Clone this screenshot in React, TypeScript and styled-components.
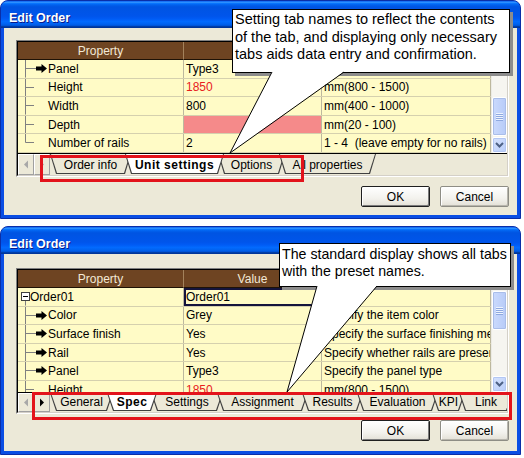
import React from 'react';
import styled, { createGlobalStyle } from 'styled-components';

const FONT = `"Liberation Sans", Arial, sans-serif`;

type Tree = 'root' | 'child' | 'last';
interface RowData {
  name: string;
  tree: Tree;
  arrow?: boolean;
  value: string;
  red?: boolean;
  pink?: boolean;
  selected?: boolean;
  desc: string;
}
interface TabData {
  label: string;
  w: number;
  active?: boolean;
}

const GlobalStyle = createGlobalStyle`
  html, body { margin: 0; padding: 0; background: #ffffff; }
  body { font-family: ${FONT}; }
  * { box-sizing: border-box; }
`;

const Page = styled.div`
  width: 524px;
  height: 458px;
  overflow: hidden;
  display: flex;
  flex-direction: column;
  gap: 7px;
`;

const Shell = styled.div`
  position: relative;
  width: 521px;
  flex: none;
`;

const Window = styled.div<{ $h: number }>`
  width: 521px;
  height: ${p => p.$h}px;
  display: flex;
  flex-direction: column;
  background: #0a4ee4;
  border: 1px solid #0a2ea8;
  border-radius: 8px 8px 0 0;
  overflow: hidden;
`;

const TitleBar = styled.div`
  flex: none;
  height: 27px;
  padding: 6px 0 0 8px;
  display: flex;
  align-items: center;
  background: linear-gradient(180deg, #0058ee 0%, #3593ff 4%, #288eff 6%, #127dff 8%, #036ffc 10%, #0262ee 14%, #0057e5 20%, #0054e3 24%, #0055eb 56%, #005bf5 66%, #026afe 76%, #0062ef 86%, #0052d6 92%, #0040ab 94%, #003092 100%);
  color: #ffffff;
  font: bold 12.5px ${FONT};
  text-shadow: 1px 1px 0 #0a1a8a;
`;

const Body = styled.div<{ $pt: number; $gap: number; $pb: number }>`
  flex: 1;
  margin: 0 3px 3px;
  background: #ece9d8;
  display: flex;
  flex-direction: column;
  padding: ${p => p.$pt}px 8px ${p => p.$pb}px 12px;
  gap: ${p => p.$gap}px;
`;

const Frame = styled.div`
  flex: none;
  border: 1px solid;
  border-color: #808080 #ffffff #ffffff #808080;
`;

const GridBox = styled.div<{ $head: number; $view: number; $strip: number }>`
  display: grid;
  grid-template-columns: 166px 138px 169px 16px;
  grid-template-rows: ${p => p.$head}px ${p => p.$view}px ${p => p.$strip}px;
  border: 1px solid;
  border-color: #000000 #d4d0c8 #d4d0c8 #000000;
  background: #ece9d8;
`;

const HeaderCell = styled.div`
  background: #6e4422;
  color: #f3e9d6;
  font: 12px ${FONT};
  display: flex;
  align-items: center;
  justify-content: center;
  white-space: nowrap;
  overflow: hidden;
  border-right: 1px solid #a3825c;
  border-bottom: 1px solid #1e1206;
`;

const Viewport = styled.div`
  grid-column: 1 / 4;
  overflow: hidden;
  background: #fffbc6;
`;

const Row = styled.div<{ $h: number }>`
  display: grid;
  grid-template-columns: 166px 138px 169px;
  height: ${p => p.$h}px;
  border-bottom: 1px solid #d5d0ae;
  font: 12px ${FONT};
  color: #000000;
`;

const Cell = styled.div<{ $bg?: string; $color?: string; $sel?: boolean }>`
  display: flex;
  align-items: center;
  overflow: hidden;
  white-space: pre;
  padding-left: 2px;
  border-right: 1px solid #bdb89e;
  background: ${p => p.$bg ?? 'transparent'};
  color: ${p => p.$color ?? '#000000'};
  box-shadow: ${p => (p.$sel ? 'inset 0 0 0 2px #14143c' : 'none')};
`;

const NameCell = styled(Cell)`
  padding-left: 0;
`;

const GutterSvg = styled.svg`
  flex: none;
  display: block;
`;

const ScrollBar = styled.div`
  grid-column: 4;
  grid-row: 1 / 3;
  display: flex;
  flex-direction: column;
  background: #f6f5f0;
  border-left: 1px solid #ecebe4;
`;

const ScrollButton = styled.div`
  flex: none;
  height: 16px;
  border: 1px solid #ffffff;
  border-radius: 2px;
  background: linear-gradient(135deg, #d6e2fd, #b9cdf9);
  box-shadow: inset 0 0 0 1px #b2c6f3;
  display: flex;
  align-items: center;
  justify-content: center;
`;

const Track = styled.div`
  flex: 1;
  display: flex;
  flex-direction: column;
`;

const Thumb = styled.div<{ $top: number; $h: number }>`
  flex: none;
  margin-top: ${p => p.$top}px;
  height: ${p => p.$h}px;
  border: 1px solid #ffffff;
  border-radius: 2px;
  background: linear-gradient(90deg, #cbdafd, #b7cbf8);
  box-shadow: inset 0 0 0 1px #a9bde9;
  display: flex;
  align-items: center;
  justify-content: center;
`;

const Grip = styled.div`
  width: 7px;
  height: 8px;
  background: repeating-linear-gradient(180deg, #eef4fe 0 1px, #8fa9e0 1px 2px);
`;

const Strip = styled.div`
  grid-column: 1 / 5;
  display: flex;
  align-items: flex-start;
  border-top: 1px solid #000000;
  overflow: hidden;
  isolation: isolate;
  background: #ece9d8;
`;

const NavButton = styled.div`
  flex: none;
  width: 16px;
  align-self: stretch;
  display: flex;
  align-items: center;
  justify-content: center;
  border: 1px solid;
  border-color: #ffffff #a0a0a0 #a0a0a0 #ffffff;
  background: #ece9d8;
`;

const Tab = styled.div<{ $w: number; $h: number; $active?: boolean; $z: number; $first?: boolean }>`
  position: relative;
  z-index: ${p => p.$z};
  flex: none;
  width: ${p => p.$w}px;
  height: ${p => p.$h}px;
  margin-left: ${p => (p.$first ? 0 : -6)}px;
  display: flex;
  align-items: flex-end;
  justify-content: center;
  padding-bottom: 2px;
  font: ${p => (p.$active ? 'bold ' : '')}12px ${FONT};
  letter-spacing: ${p => (p.$active ? '0.5px' : '0')};
  line-height: 14px;
  white-space: nowrap;
  color: #000000;

  &::before {
    content: '';
    position: absolute;
    inset: 0;
    z-index: -1;
    background: #404040;
    clip-path: polygon(0 0, 100% 0, calc(100% - 6px) 100%, 6px 100%);
  }
  &::after {
    content: '';
    position: absolute;
    inset: 0 1px 1px 1px;
    z-index: -1;
    background: ${p => (p.$active ? '#ffffff' : '#ece9d8')};
    clip-path: polygon(0 0, 100% 0, calc(100% - 6px) 100%, 6px 100%);
  }
`;

const ButtonRow = styled.div`
  flex: none;
  display: flex;
  justify-content: flex-end;
  gap: 10px;
`;

const PushButton = styled.button<{ $default?: boolean }>`
  width: 69px;
  height: 21px;
  margin: 0;
  padding: 0;
  display: flex;
  align-items: center;
  justify-content: center;
  font: 12px ${FONT};
  color: #000000;
  background: linear-gradient(180deg, #ffffff 0%, #f3f2ed 60%, #e3e0d6 100%);
  border: 1px solid ${p => (p.$default ? '#1f1f1f' : '#8e8d85')};
  border-radius: 2px;
  box-shadow: ${p =>
    p.$default
      ? 'inset 1px 1px 0 #ffffff, inset -1px -1px 0 #7a7a7a'
      : 'inset 1px 1px 0 #ffffff, inset -1px -1px 0 #b8b6ad'};
`;

const CalloutBox = styled.div<{ $l: number; $t: number; $w: number; $h: number; $fs: number; $lh: number; $pt: number }>`
  position: absolute;
  left: ${p => p.$l}px;
  top: ${p => p.$t}px;
  width: ${p => p.$w}px;
  height: ${p => p.$h}px;
  z-index: 10;
  background: #ffffff;
  border: 1px solid #000000;
  box-shadow: 3px 3px 0 #8c8c8c;
  padding: ${p => p.$pt}px 0 0 2px;
  font: ${p => p.$fs}px/${p => p.$lh}px ${FONT};
  color: #000000;
`;

const CalloutLine = styled.div`
  white-space: nowrap;
`;

const Overlay = styled.svg`
  position: absolute;
  left: 0;
  top: 0;
  z-index: 11;
  pointer-events: none;
  overflow: visible;
`;

const Highlight = styled.div<{ $l: number; $t: number; $w: number; $h: number }>`
  position: absolute;
  left: ${p => p.$l}px;
  top: ${p => p.$t}px;
  width: ${p => p.$w}px;
  height: ${p => p.$h}px;
  border: 3px solid #e3131b;
  z-index: 20;
  pointer-events: none;
`;

const TreeGutter: React.FC<{ tree: Tree; arrow?: boolean; h: number }> = ({ tree, arrow, h }) => {
  const ch = h - 1;
  const mid = Math.floor(ch / 2) + 0.5;
  const lx = 7.5;
  if (tree === 'root') {
    return (
      <GutterSvg width={12} height={ch}>
        <line x1={lx} y1={mid + 4} x2={lx} y2={ch} stroke="#808080" />
        <rect x={3.5} y={mid - 4} width={8} height={8} fill="#ffffff" stroke="#404040" />
        <line x1={5} y1={mid} x2={10} y2={mid} stroke="#000000" />
      </GutterSvg>
    );
  }
  return (
    <GutterSvg width={30} height={ch}>
      <line x1={lx} y1={0} x2={lx} y2={tree === 'last' ? mid : ch} stroke="#808080" />
      <line x1={lx} y1={mid} x2={arrow ? 18 : 16} y2={mid} stroke="#808080" />
      {arrow && (
        <path
          transform={`translate(18 ${mid - 4.5})`}
          d="M0 2.5H5.5V0L11 4.5L5.5 9V6.5H0Z"
          fill="#000000"
        />
      )}
    </GutterSvg>
  );
};

const NavArrow: React.FC<{ dir: 'left' | 'right'; enabled?: boolean }> = ({ dir, enabled }) => (
  <svg width={8} height={9}>
    <polygon
      points={dir === 'left' ? '6,0.5 2,4.5 6,8.5' : '2,0.5 6,4.5 2,8.5'}
      fill={enabled ? '#000000' : '#a8a8a8'}
    />
  </svg>
);

const Chevron: React.FC<{ up?: boolean }> = ({ up }) => (
  <svg width={9} height={6}>
    <polyline
      points={up ? '1,5 4.5,1.5 8,5' : '1,1 4.5,4.5 8,1'}
      fill="none"
      stroke="#4d6185"
      strokeWidth={2}
    />
  </svg>
);

interface GridProps {
  rows: RowData[];
  rowH: number;
  head: number;
  view: number;
  strip: number;
  tabs: TabData[];
  nextEnabled?: boolean;
  thumbTop: number;
  thumbH: number;
}

const PropertyGrid: React.FC<GridProps> = ({ rows, rowH, head, view, strip, tabs, nextEnabled, thumbTop, thumbH }) => (
  <Frame>
    <GridBox $head={head} $view={view} $strip={strip}>
      <HeaderCell>Property</HeaderCell>
      <HeaderCell>Value</HeaderCell>
      <HeaderCell>Description</HeaderCell>
      <ScrollBar>
        <ScrollButton>
          <Chevron up />
        </ScrollButton>
        <Track>
          <Thumb $top={thumbTop} $h={thumbH}>
            <Grip />
          </Thumb>
        </Track>
        <ScrollButton>
          <Chevron />
        </ScrollButton>
      </ScrollBar>
      <Viewport>
        {rows.map((r, i) => (
          <Row key={i} $h={rowH}>
            <NameCell>
              <TreeGutter tree={r.tree} arrow={r.arrow} h={rowH} />
              {r.name}
            </NameCell>
            <Cell $bg={r.pink ? '#f58a8a' : undefined} $color={r.red ? '#e8201c' : undefined} $sel={r.selected}>
              {r.value}
            </Cell>
            <Cell>{r.desc}</Cell>
          </Row>
        ))}
      </Viewport>
      <Strip>
        <NavButton>
          <NavArrow dir="left" />
        </NavButton>
        <NavButton>
          <NavArrow dir="right" enabled={nextEnabled} />
        </NavButton>
        {tabs.map((t, i) => (
          <Tab key={t.label} $w={t.w} $h={strip - 2} $active={t.active} $z={t.active ? 50 : i + 1} $first={i === 0}>
            {t.label}
          </Tab>
        ))}
      </Strip>
    </GridBox>
  </Frame>
);

const rows1: RowData[] = [
  { name: 'Panel', tree: 'child', arrow: true, value: 'Type3', desc: 'Specify the panel type' },
  { name: 'Height', tree: 'child', value: '1850', red: true, desc: 'mm(800 - 1500)' },
  { name: 'Width', tree: 'child', value: '800', desc: 'mm(400 - 1000)' },
  { name: 'Depth', tree: 'child', value: '', pink: true, desc: 'mm(20 - 100)' },
  { name: 'Number of rails', tree: 'last', value: '2', desc: '1 - 4  (leave empty for no rails)' },
];

const rows2: RowData[] = [
  { name: 'Order01', tree: 'root', value: 'Order01', selected: true, desc: '' },
  { name: 'Color', tree: 'child', arrow: true, value: 'Grey', desc: 'Specify the item color' },
  { name: 'Surface finish', tree: 'child', arrow: true, value: 'Yes', desc: 'Specify the surface finishing method' },
  { name: 'Rail', tree: 'child', arrow: true, value: 'Yes', desc: 'Specify whether rails are present' },
  { name: 'Panel', tree: 'child', arrow: true, value: 'Type3', desc: 'Specify the panel type' },
  { name: 'Height', tree: 'child', value: '1850', red: true, desc: 'mm(800 - 1500)' },
];

const tabs1: TabData[] = [
  { label: 'Order info', w: 81 },
  { label: 'Unit settings', w: 99, active: true },
  { label: 'Options', w: 67 },
  { label: 'All properties', w: 97 },
];

const tabs2: TabData[] = [
  { label: 'General', w: 63 },
  { label: 'Spec', w: 50, active: true },
  { label: 'Settings', w: 72 },
  { label: 'Assignment', w: 91 },
  { label: 'Results', w: 61 },
  { label: 'Evaluation', w: 81 },
  { label: 'KPI', w: 33 },
  { label: 'Link', w: 54 },
];

const Buttons: React.FC = () => (
  <ButtonRow>
    <PushButton $default>OK</PushButton>
    <PushButton>Cancel</PushButton>
  </ButtonRow>
);

const Pointer: React.FC<{ a: [number, number]; b: [number, number]; tip: [number, number] }> = ({ a, b, tip }) => (
  <Overlay width={521} height={230}>
    <polygon points={`${a[0]},${a[1] - 0.5} ${b[0]},${b[1] - 0.5} ${tip[0]},${tip[1]}`} fill="#ffffff" />
    <line x1={a[0]} y1={a[1]} x2={tip[0]} y2={tip[1]} stroke="#000000" strokeWidth={1} />
    <line x1={b[0]} y1={b[1]} x2={tip[0]} y2={tip[1]} stroke="#000000" strokeWidth={1} />
  </Overlay>
);

export default function App() {
  return (
    <Page>
      <GlobalStyle />
      <Shell>
        <Window $h={219}>
          <TitleBar>Edit Order</TitleBar>
          <Body $pt={12} $gap={9} $pb={8}>
            <PropertyGrid rows={rows1} rowH={18.6} head={18} view={93} strip={22} tabs={tabs1} thumbTop={39} thumbH={39} />
            <Buttons />
          </Body>
        </Window>
        <CalloutBox $l={232} $t={9} $w={278} $h={64} $fs={14.5} $lh={17.5} $pt={1}>
          <CalloutLine>Setting tab names to reflect the contents</CalloutLine>
          <CalloutLine>of the tab, and displaying only necessary</CalloutLine>
          <CalloutLine>tabs aids data entry and confirmation.</CalloutLine>
        </CalloutBox>
        <Pointer a={[272, 72]} b={[344, 72]} tip={[230, 153]} />
        <Highlight $l={40} $t={155} $w={264} $h={27} />
      </Shell>
      <Shell>
        <Window $h={229}>
          <TitleBar>Edit Order</TitleBar>
          <Body $pt={14} $gap={6} $pb={10}>
            <PropertyGrid rows={rows2} rowH={18.6} head={18} view={104} strip={20} tabs={tabs2} nextEnabled thumbTop={5} thumbH={39} />
            <Buttons />
          </Body>
        </Window>
        <CalloutBox $l={279} $t={17} $w={232} $h={44} $fs={14.2} $lh={17} $pt={2}>
          <CalloutLine>The standard display shows all tabs</CalloutLine>
          <CalloutLine>with the preset names.</CalloutLine>
        </CalloutBox>
        <Pointer a={[317, 60]} b={[377, 60]} tip={[287, 166]} />
        <Highlight $l={32} $t={166} $w={480} $h={28} />
      </Shell>
    </Page>
  );
}
